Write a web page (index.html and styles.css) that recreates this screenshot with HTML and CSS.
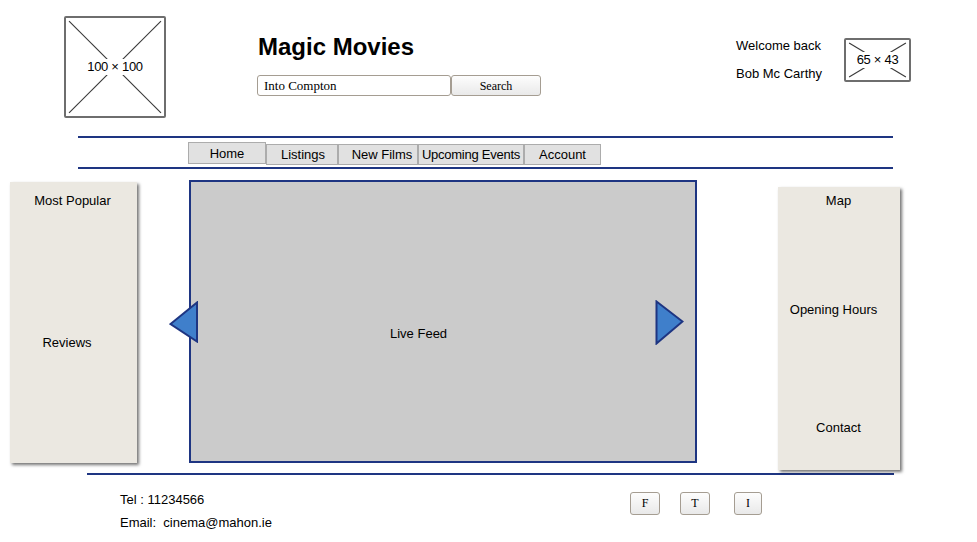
FILE: index.html
```html
<!DOCTYPE html>
<html>
<head>
<meta charset="utf-8">
<title>Magic Movies</title>
<link rel="stylesheet" href="styles.css">
</head>
<body>
<header class="header">
  <div class="placeholder logo">
    <svg class="ph-lines" viewBox="0 0 97 97" preserveAspectRatio="none"><line x1="3" y1="3" x2="94" y2="94"/><line x1="94" y1="3" x2="3" y2="94"/></svg>
    <span class="ph-label">100 × 100</span>
  </div>
  <div class="brand">
    <h1 class="title">Magic Movies</h1>
    <form class="search">
      <input class="search-input" type="text" value="Into Compton">
      <button class="search-btn" type="button">Search</button>
    </form>
  </div>
  <div class="welcome">
    <div>Welcome back</div>
    <div>Bob Mc Carthy</div>
  </div>
  <div class="placeholder avatar">
    <svg class="ph-lines" viewBox="0 0 61 39" preserveAspectRatio="none"><line x1="3" y1="3" x2="58" y2="36"/><line x1="58" y1="3" x2="3" y2="36"/></svg>
    <span class="ph-label">65 × 43</span>
  </div>
</header>

<nav class="nav">
  <a class="tab tab-active">Home</a>
  <a class="tab tab-listings">Listings</a>
  <a class="tab tab-films">New Films</a>
  <a class="tab tab-events">Upcoming Events</a>
  <a class="tab tab-account">Account</a>
</nav>

<main class="main">
  <aside class="panel panel-left">
    <div class="item item-popular">Most Popular</div>
    <div class="item item-reviews">Reviews</div>
  </aside>
  <section class="feed">
    <div class="feed-label">Live Feed</div>
    <svg class="arrow arrow-left" viewBox="0 0 30 42"><polygon points="28,1.5 28,40.5 1.5,23"/></svg>
    <svg class="arrow arrow-right" viewBox="0 0 29 45"><polygon points="1.5,1.5 27.5,21.5 1.5,43.5"/></svg>
  </section>
  <aside class="panel panel-right">
    <div class="item item-map">Map</div>
    <div class="item item-hours">Opening Hours</div>
    <div class="item item-contact">Contact</div>
  </aside>
</main>

<footer class="footer">
  <div class="contact">
    <div>Tel : 11234566</div>
    <div>Email:&nbsp; cinema@mahon.ie</div>
  </div>
  <div class="social">
    <button class="soc soc-f" type="button">F</button>
    <button class="soc soc-t" type="button">T</button>
    <button class="soc soc-i" type="button">I</button>
  </div>
</footer>
</body>
</html>
```

FILE: styles.css
```css
* { box-sizing: border-box; }

body {
  margin: 0;
  background: #ffffff;
  font-family: "Liberation Sans", Arial, sans-serif;
  font-size: 13px;
  color: #000;
  width: 977px;
  height: 542px;
  overflow: hidden;
}

/* ---------- header ---------- */
.header {
  display: flex;
  align-items: flex-start;
  height: 136px;
}

.placeholder {
  display: grid;
  place-items: center;
  border: 2px solid #6e6e6e;
  border-radius: 2px;
  background: #fff;
}
.placeholder > * { grid-area: 1 / 1; }
.ph-lines {
  width: 100%;
  height: 100%;
}
.ph-lines line {
  stroke: #3a3a3a;
  stroke-width: 1.1;
}
.ph-label {
  background: #fff;
  padding: 1px 1px;
  font-size: 13px;
  line-height: 14px;
  letter-spacing: -0.3px;
}

.logo {
  width: 102px;
  height: 102px;
  margin-left: 64px;
  margin-top: 16px;
}

.brand {
  margin-left: 91px;
  margin-top: 33px;
  width: 284px;
}
.title {
  margin: 0 0 0 1px;
  font-size: 24px;
  line-height: 28px;
  font-weight: bold;
}
.search {
  display: flex;
  margin: 14px 0 0 0;
}
.search-input {
  width: 194px;
  height: 21px;
  border: 1px solid #a59d92;
  border-radius: 3px;
  padding: 0 0 0 6px;
  font-family: "Liberation Serif", "Times New Roman", serif;
  font-size: 13px;
  color: #000;
  background: #fff;
}
.search-btn {
  width: 90px;
  height: 21px;
  border: 1px solid #a59d92;
  border-radius: 3px;
  background: linear-gradient(#fdfdfd, #e9e9e9);
  font-family: "Liberation Serif", "Times New Roman", serif;
  font-size: 12px;
  color: #000;
  padding: 2px 0 0 0;
}

.welcome {
  margin-left: 195px;
  margin-top: 32px;
  width: 108px;
  line-height: 28px;
  font-size: 13px;
}

.avatar {
  width: 67px;
  height: 44px;
  margin-top: 38px;
}

/* ---------- nav ---------- */
.nav {
  display: flex;
  align-items: flex-start;
  width: 815px;
  height: 33px;
  margin-left: 78px;
  border-top: 2px solid #1e3582;
  border-bottom: 2px solid #1e3582;
  padding: 4px 0 0 110px;
}
.tab {
  display: block;
  height: 21px;
  margin-top: 2px;
  background: #e1e1e1;
  border: 1px solid #acacac;
  text-align: center;
  font-size: 13px;
  line-height: 19px;
  white-space: nowrap;
  color: #000;
}
.tab-active {
  width: 78px;
  height: 22px;
  margin-top: 0;
  line-height: 22px;
}
.tab-listings { width: 72px; padding-left: 2px; }
.tab-films { width: 80px; padding-left: 8px; }
.tab-events { width: 106px; padding: 0 1px; letter-spacing: -0.25px; }
.tab-account { width: 77px; }

/* ---------- main ---------- */
.main {
  display: flex;
  align-items: flex-start;
  padding-left: 10px;
  margin-top: 11px;
  height: 293px;
}

.panel {
  display: flex;
  flex-direction: column;
  background: #ebe8e1;
  box-shadow: 2px 2px 3px rgba(0, 0, 0, 0.55);
  line-height: 16px;
  font-size: 13px;
}
.item { text-align: center; }

.panel-left {
  width: 127px;
  height: 281px;
  margin-top: 2px;
  padding-top: 11px;
}
.item-popular { padding-right: 2px; }
.item-reviews { margin-top: 126px; padding-right: 13px; }

.feed {
  position: relative;
  width: 508px;
  height: 283px;
  margin-left: 52px;
  background: #cbcbcb;
  border: 2px solid #1e3582;
  padding: 144px 0 0 199px;
  line-height: 16px;
}

.arrow {
  position: absolute;
}
.arrow polygon {
  fill: #3f7fcb;
  stroke: #1e3582;
  stroke-width: 2;
  stroke-linejoin: miter;
}
.arrow-left {
  left: -22px;
  top: 119px;
  width: 30px;
  height: 42px;
}
.arrow-right {
  left: 464px;
  top: 118px;
  width: 29px;
  height: 45px;
}

.panel-right {
  width: 122px;
  height: 283px;
  margin-left: 81px;
  margin-top: 7px;
  padding-top: 6px;
}
.item-map { padding-right: 1px; }
.item-hours { margin-top: 93px; padding-right: 11px; }
.item-contact { margin-top: 102px; padding-right: 1px; }

/* ---------- footer ---------- */
.footer {
  display: flex;
  align-items: flex-start;
  width: 807px;
  margin-left: 87px;
  border-top: 2px solid #1e3582;
  padding: 13px 0 0 33px;
}
.contact {
  width: 510px;
  line-height: 23px;
  font-size: 13px;
}
.social {
  display: flex;
  margin-top: 4px;
}
.soc {
  height: 23px;
  border: 1px solid #a59d92;
  border-radius: 3px;
  background: linear-gradient(#fdfdfd, #e9e9e9);
  font-family: "Liberation Serif", "Times New Roman", serif;
  font-size: 12px;
  color: #000;
  padding: 0;
}
.soc-f { width: 30px; }
.soc-t { width: 30px; margin-left: 20px; }
.soc-i { width: 28px; margin-left: 24px; }
```
